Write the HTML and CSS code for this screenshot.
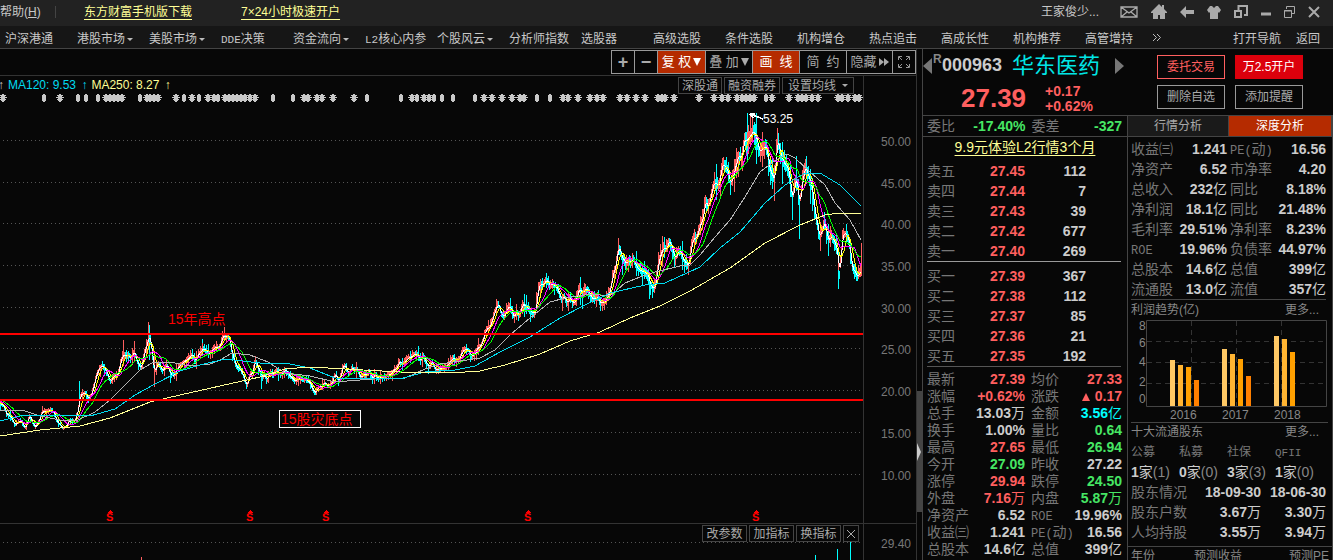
FILE: index.html
```html
<!DOCTYPE html>
<html lang="zh-CN">
<head>
<meta charset="utf-8">
<title>华东医药 000963</title>
<link rel="stylesheet" href="styles.css">
</head>
<body>
<header class="titlebar">
  <a class="help" href="#">帮助(<u>H</u>)</a>
  <span class="sep"></span>
  <a class="promo promo-app" href="#">东方财富手机版下载</a>
  <a class="promo promo-open" href="#">7×24小时极速开户</a>
  <span class="user">王家俊少...</span>
  <div class="win-icons">
    <button aria-label="邮件"><svg width="18" height="14" viewBox="0 0 18 14"><path d="M1 2h16v10H1zM1 2l8 6 8-6M1 12l6-5M17 12l-6-5" fill="none" stroke="#aaa" stroke-width="1.3"/></svg></button>
    <button aria-label="主页"><svg width="16" height="16" viewBox="0 0 16 16"><path d="M8 0l3 3V1h2v4l3 3v1h-2v6H9v-4H7v4H2V9H0V8z" fill="#aaa"/></svg></button>
    <button aria-label="后退"><svg width="14" height="12" viewBox="0 0 14 12"><path d="M0 6l6-6v4h8v4H6v4z" fill="#aaa"/></svg></button>
    <button aria-label="换肤"><svg width="14" height="13" viewBox="0 0 14 13"><path d="M3 0h2l2 2 2-2h2l3 4-2 3-1-1v7H3V6L2 7 0 4z" fill="#aaa"/></svg></button>
    <button aria-label="切换窗口"><svg width="14" height="14" viewBox="0 0 14 14"><path d="M4.500 5V1H13v9H10M1 6h6v6H1z" fill="none" stroke="#aaa" stroke-width="2"/></svg></button>
    <button aria-label="最小化"><svg width="10" height="12" viewBox="0 0 10 12"><path d="M0 8h10" stroke="#aaa" stroke-width="3"/></svg></button>
    <button aria-label="还原"><svg width="11" height="12" viewBox="0 0 11 12"><path d="M2.500 3V.5h8v7H8M.5 4.500h7v7h-7zM0 5h8" fill="none" stroke="#aaa"/></svg></button>
    <button aria-label="关闭"><svg width="12" height="12" viewBox="0 0 12 12"><path d="M1 1l10 10M11 1L1 11" stroke="#aaa" stroke-width="2"/></svg></button>
  </div>
</header>
<nav class="menubar">
  <div class="menu">
    <a href="#">沪深港通</a><a class="drop" href="#">港股市场</a><a class="drop" href="#">美股市场</a><a href="#"><span class="lat">DDE</span>决策</a><a class="drop" href="#">资金流向</a><a href="#"><span class="lat">L2</span>核心内参</a><a class="drop" href="#">个股风云</a><a href="#">分析师指数</a><a href="#">选股器</a><a href="#">高级选股</a><a href="#">条件选股</a><a href="#">机构增仓</a><a href="#">热点追击</a><a href="#">高成长性</a><a href="#">机构推荐</a><a href="#">高管增持</a>
    <button class="more" aria-label="更多菜单"><svg width="10" height="9" viewBox="0 0 10 9"><path d="M1 1l3.500 3.500L1 8M5 1l3.500 3.500L5 8" fill="none" stroke="#bbb"/></svg></button>
  </div>
  <div class="menu-right"><a href="#">打开导航</a><a href="#">返回</a></div>
</nav>
<main class="workspace">
  <section class="chart-pane">
    <div class="toolbar">
      <button class="tiny">+</button><button class="tiny">−</button><button class="on first-on">复 权<i class="tri"></i></button><button>叠 加<i class="tri"></i></button><button class="on">画&nbsp; 线</button><button>简&nbsp; 约</button><button class="hide">隐藏<svg width="10" height="8" viewBox="0 0 10 8"><path d="M0 0l5 4-5 4zM5 0l5 4-5 4z" fill="#aaa"/></svg></button><button class="full" aria-label="全屏"><svg width="12" height="12" viewBox="0 0 12 12"><path d="M.5 4V.5H4M8 .5h3.500V4M11.500 8v3.500H8M4 11.500H.5V8M1 1l3 3M11 1L8 4M11 11L8 8M1 11l3-3" fill="none" stroke="#999"/></svg></button>
    </div>
    <div class="legend">
      <span class="legend-up">↑</span>
      <span class="ma120">MA120: 9.53 <b>↑</b></span>
      <span class="ma250">MA250: 8.27 <b>↑</b></span>
      <div class="tags"><button>深股通</button><button>融资融券</button><button class="ma-set">设置均线</button></div>
    </div>
    <div class="plot">
      <svg id="chart" class="chart" viewBox="0 94 917 466" preserveAspectRatio="xMinYMin meet" role="img" aria-label="华东医药K线图">
        <g id="grid"></g><g id="stars"></g><g id="candles"></g><g id="lines"></g><g id="marks"></g>
        <rect x="0" y="333" width="863" height="2" fill="#f00"/>
        <rect x="0" y="399" width="863" height="2" fill="#f00"/>
        <text class="note" x="168" y="324">15年高点</text>
        <rect x="279.500" y="410.500" width="81" height="17" fill="none" stroke="#fff"/>
        <text class="note" x="281" y="424">15股灾底点</text>
        <path d="M750 114l13 5M750 114l5 0M750 114l3 4" stroke="#fff" stroke-width="1.500"/>
        <text class="peak" x="763" y="123">53.25</text>
        <g id="axis"></g>
      </svg>
      <div class="sub-tools"><button>改参数</button><button>加指标</button><button>换指标</button><button class="close" aria-label="关闭指标"><svg width="10" height="10" viewBox="0 0 10 10"><path d="M1 1l8 8M9 1L1 9" stroke="#aaa"/></svg></button></div>
    </div>
  </section>
  <div class="splitter"><button class="thumb" aria-label="展开"><svg width="4" height="18" viewBox="0 0 4 18"><path d="M0 0l4 9-4 9z" fill="#ccc"/></svg></button></div>
  <aside class="quote">
    <div class="stock-head">
      <button class="step" aria-label="上一只"><svg width="9" height="16" viewBox="0 0 9 16"><path d="M9 0v16L0 8z" fill="#777"/></svg></button>
      <div class="ident">
        <div class="name-row"><sup>R</sup><b>000963</b><h1>华东医药</h1></div>
        <div class="price-row"><strong>27.39</strong><div class="chg"><span>+0.17</span><span>+0.62%</span></div></div>
      </div>
      <button class="step next" aria-label="下一只"><svg width="9" height="16" viewBox="0 0 9 16"><path d="M0 0v16l9-8z" fill="#777"/></svg></button>
      <div class="actions"><button class="trade">委托交易</button><button class="open">万2.5开户</button><button>删除自选</button><button>添加提醒</button></div>
    </div>
    <div class="cols">
      <div class="left-col">
        <table class="pairs ratio"><tr><th>委比</th><td class="g">-17.40%</td><th>委差</th><td class="g">-327</td></tr></table>
        <a class="l2" href="#">9.9元体验L2行情3个月</a>
        <table class="book">
          <tr><th>卖五</th><td>27.45</td><td>112</td></tr><tr><th>卖四</th><td>27.44</td><td>7</td></tr><tr><th>卖三</th><td>27.43</td><td>39</td></tr><tr><th>卖二</th><td>27.42</td><td>677</td></tr><tr><th>卖一</th><td>27.40</td><td>269</td></tr>
        </table>
        <table class="book buy">
          <tr><th>买一</th><td>27.39</td><td>367</td></tr><tr><th>买二</th><td>27.38</td><td>112</td></tr><tr><th>买三</th><td>27.37</td><td>85</td></tr><tr><th>买四</th><td>27.36</td><td>21</td></tr><tr><th>买五</th><td>27.35</td><td>192</td></tr>
        </table>
        <table class="pairs detail">
          <tr><th>最新</th><td class="r">27.39</td><th>均价</th><td class="r">27.33</td></tr>
          <tr><th>涨幅</th><td class="r">+0.62%</td><th>涨跌</th><td class="r"><i class="up"></i>0.17</td></tr>
          <tr><th>总手</th><td>13.03<em>万</em></td><th>金额</th><td class="c">3.56<em>亿</em></td></tr>
          <tr><th>换手</th><td>1.00%</td><th>量比</th><td class="g">0.64</td></tr>
          <tr><th>最高</th><td class="r">27.65</td><th>最低</th><td class="g">26.94</td></tr>
          <tr><th>今开</th><td class="g">27.09</td><th>昨收</th><td>27.22</td></tr>
          <tr><th>涨停</th><td class="r">29.94</td><th>跌停</th><td class="g">24.50</td></tr>
          <tr><th>外盘</th><td class="r">7.16<em>万</em></td><th>内盘</th><td class="g">5.87<em>万</em></td></tr>
          <tr><th>净资产</th><td>6.52</td><th><span class="lat">ROE</span></th><td>19.96%</td></tr>
          <tr><th>收益㈢</th><td>1.241</td><th><span class="lat">PE(</span>动<span class="lat">)</span></th><td>16.56</td></tr>
          <tr><th>总股本</th><td>14.6<em>亿</em></td><th>总值</th><td>399<em>亿</em></td></tr>
        </table>
      </div>
      <div class="right-col">
        <div class="tabs"><button>行情分析</button><button class="active">深度分析</button></div>
        <table class="pairs fund">
          <tr><th>收益㈢</th><td>1.241</td><th><span class="lat">PE(</span>动<span class="lat">)</span></th><td>16.56</td></tr>
          <tr><th>净资产</th><td>6.52</td><th>市净率</th><td>4.20</td></tr>
          <tr><th>总收入</th><td>232<em>亿</em></td><th>同比</th><td>8.18%</td></tr>
          <tr><th>净利润</th><td>18.1<em>亿</em></td><th>同比</th><td>21.48%</td></tr>
          <tr><th>毛利率</th><td>29.51%</td><th>净利率</th><td>8.23%</td></tr>
          <tr><th><span class="lat">ROE</span></th><td>19.96%</td><th>负债率</th><td>44.97%</td></tr>
          <tr><th>总股本</th><td>14.6<em>亿</em></td><th>总值</th><td>399<em>亿</em></td></tr>
          <tr><th>流通股</th><td>13.0<em>亿</em></td><th>流值</th><td>357<em>亿</em></td></tr>
        </table>
        <div class="sec-head"><span>利润趋势(亿)</span><a href="#">更多...</a></div>
        <svg class="profit" viewBox="1131 320 197 102" role="img" aria-label="利润趋势">
          <g fill="none" stroke="#444"><path d="M1146.500 320.500h180v86h-180z"/><path stroke="#333" stroke-dasharray="5 4" d="M1147 341.500h179M1147 362.500h179M1147 383.500h179M1191.500 321v85M1236.500 321v85M1281.500 321v85"/></g>
          <g fill="#ffc864"><path d="M1170 360h5v46h-5zM1222 349h5v57h-5zM1274 336h5v70h-5z"/></g>
          <g fill="#ffb432"><path d="M1178 365h5v41h-5zM1230 354h5v52h-5zM1282 339h5v67h-5z"/></g>
          <g fill="#ffa000"><path d="M1186 367h5v39h-5zM1238 359h5v47h-5zM1290 352h5v54h-5z"/></g>
          <g fill="#ff8000"><path d="M1194 380h5v26h-5zM1246 376h5v30h-5z"/></g>
          <g class="tick"><text x="1139" y="330">8</text><text x="1139" y="347">6</text><text x="1139" y="366">4</text><text x="1139" y="386">2</text><text x="1139" y="403">0</text><text x="1170" y="419">2016</text><text x="1222" y="419">2017</text><text x="1274" y="419">2018</text></g>
        </svg>
        <div class="sec-head holders"><span>十大流通股东</span><a href="#">更多...</a></div>
        <table class="fundtypes">
          <tr><th>公募</th><th>私募</th><th>社保</th><th><span class="lat">QFII</span></th></tr>
          <tr><td><b>1</b>家<i>(1)</i></td><td><b>0</b>家<i>(0)</i></td><td><b>3</b>家<i>(3)</i></td><td><b>1</b>家<i>(0)</i></td></tr>
        </table>
        <table class="pairs share">
          <tr><th>股东情况</th><td>18-09-30</td><td>18-06-30</td></tr>
          <tr><th>股东户数</th><td>3.67<em>万</em></td><td>3.30<em>万</em></td></tr>
          <tr><th>人均持股</th><td>3.55<em>万</em></td><td>3.94<em>万</em></td></tr>
        </table>
        <div class="forecast"><span>年份</span><span>预测收益</span><span>预测PE</span></div>
      </div>
    </div>
  </aside>
</main>
<script src="chart.js"></script>
</body>
</html>
```

FILE: styles.css
```css
* { box-sizing: border-box; }
body { margin: 0; height: 100vh; overflow: hidden; display: flex; flex-direction: column; background: #070707; color: #c8c8c8; font: 12px/20px "Liberation Sans", "Noto Sans CJK SC", sans-serif; white-space: nowrap; }
a { color: inherit; text-decoration: none; }
button { font: inherit; color: inherit; background: none; border: 0; padding: 0; white-space: nowrap; }
svg { display: block; }
i, em { font-style: normal; }
.lat { font-family: "Liberation Mono", monospace; font-size: 11px; line-height: 1; }

.titlebar { height: 26px; flex: none; background: #222; display: flex; align-items: center; padding-bottom: 2px; }
.help { width: 55px; }
.sep { width: 1px; height: 12px; background: #444; }
.promo { color: #ffff96; text-decoration: underline; text-underline-offset: 3px; }
.promo-app { margin-left: 28px; }
.promo-open { margin-left: 49px; }
.user { margin-left: auto; width: 79px; }
.win-icons { display: flex; align-items: center; gap: 13px; padding-right: 13px; }

.menubar { height: 23px; flex: none; background: #161616; border-bottom: 1px solid #444; display: flex; justify-content: space-between; line-height: 26px; }
.menu { display: flex; padding-left: 5px; }
.menu a { width: 72px; }
.drop::after { content: ""; display: inline-block; border: 3px solid transparent; border-top-color: #bbb; border-bottom: 0; margin: 0 0 2px 2px; }
.more { align-self: center; margin-left: -5px; }
.menu-right { display: flex; gap: 15px; padding-right: 13px; }

.workspace { flex: 1; min-height: 0; display: grid; grid-template-columns: minmax(0, 1fr) 5px 411px; }
.chart-pane { display: flex; flex-direction: column; min-width: 0; border-right: 1px solid #333; }
.toolbar { height: 27px; flex: none; display: flex; justify-content: flex-end; padding: 1px 0; border-bottom: 1px solid #333; }
.toolbar button { width: 47px; height: 24px; border: 1px solid #999; border-left-width: 0; display: flex; align-items: center; justify-content: center; gap: 2px; color: #aaa; font-size: 13px; }
.toolbar .first-on { width: 48px; }
.toolbar .hide { width: 46px; }
.toolbar .tiny { width: 23px; font-size: 18px; font-weight: bold; }
.toolbar .tiny:first-child { width: 24px; border-left-width: 1px; }
.toolbar .full { width: 23px; }
.toolbar .on { background: #b52b00; color: #fff; }
.tri { border: 4px solid transparent; border-top: 8px solid currentColor; border-bottom: 0; }
.legend { height: 18px; flex: none; margin-right: 52px; border-right: 1px solid #333; display: flex; line-height: 18px; gap: 4px; }
.legend-up { width: 6px; margin-left: -2px; }
.legend b { font-weight: normal; margin-left: 2px; }
.ma120 { color: #00dcf0; }
.ma250 { color: #ffff96; }
.tags { margin-left: auto; padding: 1px 9px 0 0; display: flex; gap: 2px; }
.tags button, .sub-tools button { border: 1px solid #444; height: 17px; line-height: 16px; padding: 0 3px; color: #aaa; }
.tags .ma-set { width: 72px; }
.ma-set::after { content: ""; display: inline-block; border: 3px solid transparent; border-top-color: #aaa; border-bottom: 0; margin: 0 0 3px 6px; }
.plot { position: relative; flex: 1; min-height: 0; }
.chart { width: 100%; min-width: 917px; shape-rendering: crispEdges; }
.chart text { font-family: "Liberation Sans", "Noto Sans CJK SC", sans-serif; }
.axis { fill: #777; font-size: 12px; }
.note { fill: #f00; font-size: 14px; }
.peak { fill: #fff; font-size: 12px; }
.dollar { fill: #f00; font-size: 11px; font-weight: bold; }
.sub-tools { position: absolute; top: 431px; right: 57px; display: flex; gap: 2px; }
.sub-tools button { width: 45px; }
.sub-tools .close { width: 16px; padding: 0 2px; }

.splitter { display: flex; padding-top: 342px; align-items: flex-start; }
.thumb { width: 5px; height: 121px; background: #444; }

.quote { border-left: 1px solid #444; display: flex; flex-direction: column; color: #ccc; min-height: 0; }
.stock-head { height: 66px; flex: none; display: flex; align-items: flex-start; }
.step { padding-top: 9px; }
.ident { width: 183px; padding-left: 1px; }
.name-row { display: flex; height: 33px; line-height: 33px; }
.name-row sup { width: 9px; font-size: 12px; line-height: 20px; font-weight: bold; color: #888; }
.name-row b { font-size: 18px; width: 70px; }
.name-row h1 { margin: 0; color: #00e6e6; font-size: 22px; font-weight: normal; }
.price-row { display: flex; padding-left: 28px; color: #ff5f5f; font-weight: bold; }
.price-row strong { font-size: 26px; line-height: 32px; width: 84px; }
.chg { display: flex; flex-direction: column; font-size: 14px; line-height: 15px; padding-top: 2px; }
.actions { margin-left: auto; padding: 6px 30px 0 0; display: grid; grid-template-columns: 68px 68px; gap: 6px 10px; }
.actions button { height: 24px; border: 1px solid #999; color: #aaa; line-height: 22px; }
.actions .trade { color: #ff5f5f; border-color: #ff5f5f; }
.actions .open { background: #dc000c; border-color: #dc000c; color: #fff; }
.cols { flex: 1; min-height: 0; display: grid; grid-template-columns: 205px 205px; border-top: 1px solid #444; }
.left-col { display: flex; flex-direction: column; border-right: 1px solid #444; }
table { border-collapse: collapse; border-spacing: 0; table-layout: fixed; }
th { padding: 0; font-weight: normal; text-align: left; color: #777; font-size: 14px; }
td { padding: 0; font-size: 14px; font-weight: bold; text-align: right; }
td em { font-weight: normal; }
.pairs th .lat { font-size: 12px; }
.r { color: #ff5f5f; }
.g { color: #46e664; }
.c { color: #0ff; }
.pairs { width: 195px; margin: 0 5px 0 4px; }
.pairs td { width: 56px; }
.pairs th { width: 42px; }
.pairs td + th { width: 48px; padding-left: 6px; }
.pairs th + td:last-child { width: 49px; }
.ratio { width: 204px; margin: 0; border-bottom: 1px solid #444; line-height: 20px; }
.ratio th:first-child { padding-left: 4px; width: 32px; }
.ratio td:nth-child(2) { width: 66px; }
.ratio td:last-child { padding-right: 5px; }
.l2 { color: #ffff96; font-size: 14px; line-height: 20px; height: 24px; text-align: center; text-decoration: underline; text-underline-offset: 3px; }
.book { width: 194px; margin: 0 6px 0 4px; line-height: 20px; border-bottom: 1px solid #999; }
.book th { width: 42px; }
.book td { width: 61px; color: #ff5f5f; }
.book th + td { width: 56px; }
.book td + td { color: #ccc; padding-right: 35px; width: 96px; }
.buy { margin-top: 4px; border-bottom-color: #555; }
.detail { margin-top: 4px; line-height: 17px; }
.up { display: inline-block; border: 4px solid transparent; border-bottom: 8px solid; border-top: 0; margin-right: 5px; }

.right-col { display: flex; flex-direction: column; border-right: 1px solid #444; }
.tabs { height: 21px; flex: none; display: grid; grid-template-columns: 101px 1fr; border-bottom: 1px solid #444; }
.tabs button { background: #1a1a1a; color: #aaa; border-right: 1px solid #444; }
.tabs .active { background: #b52b00; color: #fff; }
.fund { margin: 2px 0 0 3px; line-height: 20px; border-bottom: 1px solid #444; }
.fund td { width: 54px; }
.fund td + th { padding-left: 3px; }
.fund th + td:last-child { width: 51px; }
.sec-head { display: flex; justify-content: space-between; margin: 0 4px 0 3px; padding-right: 9px; color: #888; line-height: 20px; height: 20px; }
.profit { width: 197px; margin-left: 3px; }
.tick { fill: #888; font: 12px "Liberation Sans", sans-serif; }
.holders { border-top: 1px solid #444; line-height: 19px; }
.fundtypes { width: 192px; margin-left: 3px; line-height: 20px; }
.fundtypes th { font-size: 12px; }
.fundtypes td { text-align: left; font-weight: normal; }
.fundtypes i { color: #888; }
.share { margin: 0 0 4px 3px; line-height: 20px; }
.pairs.share th { width: 66px; }
.pairs.share td:nth-child(2) { width: 64px; }
.pairs.share td:last-child { width: 65px; }
.forecast { border-top: 1px solid #444; padding-left: 3px; display: grid; grid-template-columns: 63px 95px 1fr; color: #888; line-height: 18px; }
```

FILE: chart.js
```js
const NS = 'http://www.w3.org/2000/svg';
const add = (id, tag, attrs, text) => {
  const el = document.createElementNS(NS, tag);
  for (const k in attrs) el.setAttribute(k, attrs[k]);
  if (text) el.textContent = text;
  document.getElementById(id).appendChild(el);
};
const parse = s => s.trim().split(/\s+/).map(p => p.split(',').map(Number));

const price = parse(`0,404 6,412 14,424 20,421 25,427 29,415 35,427 41,414 46,411 51,409 56,420 62,427 68,423 74,420 77,412 80,394 85,392 88,396 92,392 95,380 99,365 102,367 106,374 110,382 114,377 118,370 122,354 126,352 130,362 134,352 138,365 141,368 145,350 148,334 151,350 154,374 158,362 162,368 166,366 170,375 174,377 178,368 184,362 190,356 196,358 202,346 206,350 210,354 214,347 220,342 224,334 229,339 232,355 236,368 242,372 247,384 252,370 255,363 259,372 262,380 268,375 275,373 280,374 288,371 294,378 300,375 305,380 310,387 315,396 320,387 325,384 330,385 334,375 338,380 344,366 349,372 354,370 360,375 366,372 372,376 380,376 390,377 396,368 402,362 408,356 414,358 420,357 425,361 430,364 436,367 442,364 448,363 455,359 462,352 468,351 474,354 480,345 484,334 492,320 498,306 504,311 510,302 514,315 518,315 524,306 530,309 535,308 538,290 542,286 548,283 555,285 560,295 567,300 573,306 578,293 583,290 590,295 596,302 604,298 610,285 614,264 620,250 625,262 629,255 634,268 638,275 645,278 650,286 655,282 660,260 664,250 668,244 674,252 680,250 685,260 688,268 691,248 696,242 700,217 706,205 712,190 718,190 721,168 727,178 730,185 735,165 740,150 745,147 748,140 752,140 757,150 762,158 767,147 770,165 774,175 777,140 782,150 788,165 792,198 796,180 799,205 803,175 805,167 811,180 815,212 819,233 824,216 828,233 833,240 837,245 839,268 842,235 848,243 852,263 857,274 861,264`);
const slow = {
  '#b4b4b4': '0,410 22,410 40,416 60,420 78,420 95,412 110,400 125,385 140,370 152,363 170,362 190,366 210,364 220,360 232,353 250,355 268,362 285,373 310,376 335,382 360,380 385,378 405,378 425,369 440,364 460,361 480,358 495,350 510,335 530,318 550,302 565,298 590,294 610,296 625,283 640,277 655,272 680,266 690,265 700,255 715,237 730,220 745,197 760,172 773,162 787,154 795,158 810,172 825,185 835,203 850,220 861,240',
  '#00dcf0': '0,421 20,416 60,415 90,416 115,409 135,395 155,384 180,371 200,365 225,359 260,363 290,364 310,368 335,378 400,379 425,372 455,370 475,366 500,352 530,337 560,318 585,305 610,293 645,285 665,283 700,267 720,248 740,232 765,203 785,185 805,173 820,173 840,185 861,206',
  '#ffff96': '0,436 40,430 80,426 110,418 150,402 180,395 220,386 260,377 285,369 310,367 345,369 400,372 450,373 480,371 505,365 540,354 570,341 600,332 630,318 660,306 690,291 730,268 765,243 800,225 825,215 840,213 861,213'
};

let seed = 7;
const rnd = () => (seed = (seed * 16807) % 2147483647) / 2147483647;

// daily midpoints, one per pixel column, with short swings around the main path
const mid = [];
let from = 0, to = 0;
for (let x = 0, k = 0; x <= 861; x++) {
  while (k < price.length - 2 && x > price[k + 1][0]) k++;
  const [a, b] = price[k], [c, d] = price[k + 1];
  const base = b + (d - b) * (x - a) / (c - a);
  if (x % 3 === 0) { from = to; to = (rnd() - 0.5) * 2; }
  const swing = from + (to - from) * (x % 3) / 3;
  mid.push(base + swing * (2 + (435 - base) * 0.03));
}

let red = '', cyan = '';
for (let x = 0; x <= 861; x++) {
  const trend = mid[Math.min(861, x + 1)] - mid[Math.max(0, x - 1)];
  const amp = 1.5 + (435 - mid[x]) * 0.026;
  const reach = x % 2 ? 0.6 : 1 + (rnd() < 0.3 ? 1.6 : 0.4);
  const top = mid[x] - amp * (0.4 + rnd() * reach), bottom = mid[x] + amp * (0.4 + rnd() * reach);
  const seg = `M${x}.5 ${top.toFixed(0)}V${bottom.toFixed(0)}`;
  if (rnd() * 2 - 1 > trend) red += seg; else cyan += seg;
}
red += 'M123.5 340V366M134.5 341V362M148.5 322V350M154.5 355V387M224.5 327V340M777.5 128V150M838.5 260V270M861.5 243V270';
cyan += 'M79.5 381V399M149.5 325V360M202.5 339V355M747.5 113V160M755.5 124V150M799.5 195V239M838.5 250V289M649.5 280V299M261.5 370V389';
red += 'M141.5 557V560';
cyan += 'M815.5 555V560M837.5 549V560M850.5 542V560';
add('candles', 'path', { d: cyan, stroke: '#0ff' });
add('candles', 'path', { d: red, stroke: '#ff5f5f' });

const average = n => mid.map((_, x) => {
  let sum = 0;
  for (let j = 0; j < n; j++) sum += x - j < 0 ? 404 - (j - x) * 0.4 : mid[x - j];
  return `${x},${(sum / n).toFixed(1)}`;
}).join(' ');
[[3, '#fff'], [7, '#ff0'], [14, '#f0f'], [22, '#0f0']].forEach(([n, c]) =>
  add('lines', 'polyline', { points: average(n), fill: 'none', stroke: c }));
for (const c in slow) add('lines', 'polyline', { points: slow[c], fill: 'none', stroke: c });

[140, 182, 223, 265, 307, 348, 390, 432, 474, 542].forEach((y, i) => {
  add('grid', 'path', { d: `M3 ${y}.5H866`, stroke: '#555', 'stroke-dasharray': '1 3' });
  add('axis', 'text', { x: 881, y: y + 6, class: 'axis' }, i < 9 ? `${50 - i * 5}.00` : '29.40');
});
add('grid', 'path', { d: 'M863.5 94V560M0 523.5H917', stroke: '#333' });

const stars = [3, 60, 106, 110, 114, 118, 122, 147, 150, 154, 158, 176, 192, 208, 214, 225, 229, 233, 237, 241, 245, 250, 255, 304, 308, 317, 322, 333, 354, 412, 424, 429, 484, 492, 502, 512, 520, 524, 563, 568, 578, 590, 597, 603, 620, 627, 636, 645, 658, 662, 665, 674, 699, 714, 722, 728, 737, 742, 746, 750, 754, 772, 789, 798, 802, 806, 812, 818, 838, 842, 848, 855, 859];
const diamonds = [44, 78, 86, 98, 140, 184, 199, 218, 273, 293, 367, 401, 417, 434, 442, 453, 475, 537, 550, 766];
const body = x => `M${x - 1} 94h2v1h1v6h-1v1h-2v-1h-1v-6h1z`;
const rays = x => `M${x - 4} 97h8v1h-8zM${x - 3} 95h6v1h-6zM${x - 3} 99h6v1h-6z`;
add('stars', 'path', { fill: '#c8c8c8', d: [...stars, ...diamonds].map(body).join('') });
add('stars', 'path', { fill: '#c8c8c8', d: stars.map(rays).join('') });

[110, 250, 326, 528, 756].forEach(x => {
  add('marks', 'text', { x: x - 4, y: 521, class: 'dollar' }, 'S');
  add('marks', 'path', { d: `M${x} 510l3 3h-6z`, fill: '#f00' });
});
```
